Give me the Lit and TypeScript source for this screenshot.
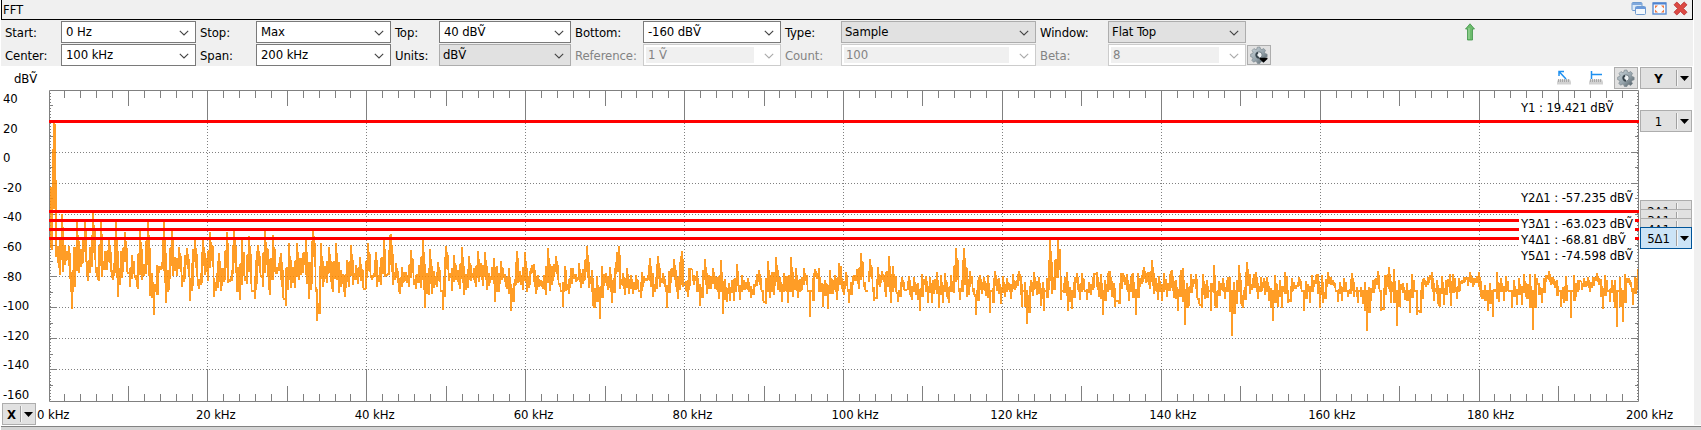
import { LitElement, html, css, svg, nothing } from "lit";
import { customElement, property } from "lit/decorators.js";

const FONT = css`13px "DejaVu Sans Condensed", "DejaVu Sans", sans-serif`;

/* Spectrum extremes: alternating x,y pairs in thirds of a pixel, per block origin. */
const BLOCKS = [
  { x: 0, y: 80, d: "150,320 152,505 157,505 158,208 161,125 166,145 167,530 173,498 179,585 185,403 190,575 195,495 200,540 206,498 211,598 216,688 221,500 226,622 232,425 237,580 243,508 248,548 254,425 258,545 263,604 270,500 275,560 280,400 285,540 291,592 297,604 302,425 307,590 315,512 320,570 327,475 332,575 338,600 343,550 349,427 355,650 362,512 368,575 374,457 380,575 386,578 391,620 396,525 402,575 409,600 414,628 420,450 426,600 432,553 438,583 443,416 450,647 456,578 462,706 470,555 478,580 485,545 491,427 498,670 504,570 510,598 515,443 520,588 526,530 532,588 537,500 543,575 547,622 553,560 561,503 566,588 570,662 576,550 585,480 591,590 597,626 603,580 609,477 615,585 620,535 623,602 631,455 638,560 643,652 650,580 656,518 662,634 668,565 674,600 680,457 685,610 692,590 697,570 703,450 709,580 711,635 715,560 720,661 726,478 733,580 740,611 748,467 754,613 764,658 768,540 773,495 779,580 785,595 789,620 796,452 803,590 810,645 820,464 826,575 831,580 837,550 844,518 850,655 858,677 866,488 873,625 879,560 885,625 891,488 896,600 903,535 910,580 918,478 927,658 933,545 938,443 944,560 950,724 956,668 962,490 968,620 974,558 980,610 986,500 992,605 1000,635 1009,488 1017,638 1023,570 1029,600 1035,652 1040,540 1047,620 1054,495 1060,615 1068,555 1073,612 1079,532 1088,625 1097,628 1103,488 1109,575 1115,600 1121,580 1127,517 1132,622 1139,560 1144,615 1151,480 1156,590 1163,580 1169,465 1173,463 1180,615 1187,550 1193,610 1199,643 1207,560 1213,605 1219,575 1228,620 1234,511 1240,580 1249,628 1256,555" },
  { x: 420, y: 200, d: "3,265 8,110 15,325 22,218 27,285 31,148 37,283 43,212 50,260 55,187 60,245 68,330 73,230 78,137 84,210 88,243 95,203 97,273 103,166 108,240 115,210 120,268 125,142 131,284 138,222 144,265 148,167 154,243 162,205 167,262 173,154 178,245 184,190 190,257 196,155 201,270 208,220 215,240 221,175 224,305 231,197 238,277 242,182 248,235 254,222 258,262 263,268 268,203 273,334 279,265 285,238 290,154 294,250 301,212 308,270 314,157 320,275 327,228 333,203 342,192 347,283 353,225 357,255 362,240 368,268 373,225 379,284 385,143 391,274 397,197 403,232 408,167 413,240 421,260 429,322 434,197 439,235 446,283 452,205 460,207 468,246 473,230 478,190 483,265 490,207 496,240 502,138 508,265 515,210 520,318 525,320 530,228 540,356 546,198 552,258 559,220 564,270 570,200 576,308 582,235 588,187 596,138 600,268 608,218 614,285 620,205 626,282 632,224 640,283 648,225 655,268 662,293 667,215 673,248 683,225 691,175 700,290 707,230 714,169 720,260 728,220 734,262 740,323 748,212 754,250 761,178 768,260 774,298 780,187 785,154 790,260 797,243 803,292 808,205 815,208 822,255 830,212 840,317 846,260 855,178 862,282 868,225 873,268 880,203 886,266 892,230 896,296 903,181 909,341 915,238 920,305 926,250 930,303 935,240 942,303 950,193 955,245 960,300 966,225 971,263 977,267 983,233 993,295 1000,268 1007,240 1018,211 1023,270 1030,302 1038,312 1044,184 1050,295 1056,215 1062,285 1067,172 1073,270 1079,230 1086,307 1092,220 1098,240 1105,310 1114,172 1120,290 1128,205 1134,295 1140,238 1145,270 1153,205 1160,255 1171,350 1178,235 1185,208 1192,238 1198,205 1208,322 1215,240 1220,267 1225,328 1230,210 1238,282 1245,225 1250,300 1256,190" },
  { x: 840, y: 200, d: "3,213 6,268 12,285 17,217 22,240 27,310 32,245 40,255 50,208 57,268 64,160 70,230 76,270 83,270 89,176 95,238 102,302 107,292 113,202 119,260 125,213 131,245 138,290 148,168 153,310 160,197 167,275 173,307 180,270 186,232 192,270 200,268 206,228 210,285 217,300 222,232 228,285 235,248 240,334 246,223 252,256 258,227 265,308 271,232 276,310 280,240 285,270 291,217 297,325 304,225 308,310 315,220 321,292 327,310 333,226 341,280 348,144 355,240 361,300 367,240 372,145 380,290 385,275 391,214 397,250 403,285 409,345 415,240 421,225 426,283 432,232 438,288 444,226 451,338 458,265 466,214 472,272 478,235 484,313 489,228 495,292 501,235 506,270 513,298 518,223 524,270 530,240 538,212 542,255 544,235 547,320 556,245 561,373 567,285 573,240 580,288 583,217 590,285 596,232 603,317 608,246 613,332 620,235 626,270 631,120 635,283 641,230 645,270 654,120 660,190 664,300 673,250 680,217 684,334 691,262 697,328 703,245 710,220 715,270 720,300 727,218 733,270 741,300 747,245 753,285 760,230 770,215 776,290 782,222 788,345 794,240 798,303 804,220 811,214 816,290 822,250 826,322 836,300 842,220 850,218 855,255 862,222 868,302 874,230 880,220 888,345 894,220 900,260 906,225 912,202 918,250 925,215 931,268 937,181 942,283 948,235 953,300 958,228 966,304 972,218 978,270 982,290 990,222 997,211 1003,293 1008,240 1014,334 1020,225 1030,203 1035,374 1042,250 1048,318 1054,222 1060,262 1067,222 1072,295 1078,312 1086,325 1090,222 1096,298 1102,240 1112,332 1121,196 1126,317 1132,320 1138,243 1143,270 1148,235 1154,298 1160,240 1170,232 1176,407 1182,245 1190,312 1197,194 1202,312 1208,325 1214,260 1220,187 1230,282 1238,235 1247,215 1253,298" },
  { x: 1260, y: 200, d: "3,232 8,265 13,233 16,285 22,232 28,303 33,265 39,364 45,226 50,290 54,322 60,240 67,325 74,215 80,250 85,310 91,298 97,235 102,262 108,268 114,245 118,230 124,268 132,334 138,242 144,268 150,308 156,225 162,262 168,225 173,223 179,323 185,225 190,310 196,275 203,215 212,255 220,240 225,265 235,305 240,245 245,303 251,235 257,262 264,292 270,268 276,220 282,290 290,262 295,310 302,260 308,312 314,245 320,392 326,260 332,303 340,240 346,268 354,214 358,268 363,332 370,325 376,225 382,260 387,200 394,310 402,208 410,377 416,240 423,270 430,250 435,300 442,250 450,340 456,223 462,265 472,344 480,330 486,245 493,235 498,262 505,230 511,240 517,217 522,302 530,240 535,312 540,320 546,228 551,316 558,240 563,262 569,222 573,317 580,222 586,255 592,298 598,235 606,253 613,232 620,240 625,258 631,215 638,260 644,235 652,250 657,215 663,290 670,292 676,255 685,334 691,250 700,352 710,217 717,305 724,235 731,303 738,228 745,265 756,325 762,240 772,316 777,235 786,315 792,222 798,290 805,298 810,222 819,391 826,223 832,255 838,248 845,310 851,235 857,245 866,214 872,255 878,230 884,265 892,240 902,320 908,262 912,310 919,228 932,355 942,226 948,290 955,240 962,245 967,270 973,235 979,262 985,230 991,275 998,230 1003,250 1010,220 1016,255 1022,238 1028,328 1036,225 1042,265 1050,305 1056,240 1062,305 1066,240 1071,380 1079,232 1088,367 1094,222 1100,250 1106,235 1112,260 1118,315 1124,232 1130,270 1134,208" },
];

/* One pixel column per step: every column spans the samples that fall near it. */
function tracePath(): string {
  const p: [number, number][] = [];
  for (const b of BLOCKS)
    for (const s of b.d.split(" ")) {
      const [x, y] = s.split(",").map(Number);
      p.push([b.x + x / 3, b.y + y / 3]);
    }
  const top = new Map<number, number>();
  const bottom = new Map<number, number>();
  const mark = (c: number, y0: number, y1: number) => {
    top.set(c, Math.min(top.get(c) ?? 999, y0));
    bottom.set(c, Math.max(bottom.get(c) ?? 0, y1));
  };
  for (let i = 0; i < p.length; i++) {
    const [x, y] = p[i];
    const c = Math.round(x - 1);
    const prev = p[i - 1] ?? p[i];
    const next = p[i + 1] ?? p[i];
    const near = y < prev[1] ? Math.max(prev[1], next[1]) : Math.min(prev[1], next[1]);
    const a = Math.min(y, near);
    const b = Math.max(y, near);
    const body = a + (b - a) * 0.6;
    if (y <= prev[1]) {
      mark(c, y, body);
      mark(c + 1, y, body);
      mark(c + 2, y + (body - y) * 0.35, body);
    } else {
      mark(c, a + (b - a) * 0.4, y);
      mark(c + 1, a + (b - a) * 0.4, y);
    }
    if (i > 0) {
      const u = Math.min(prev[1], y);
      const l = Math.max(prev[1], y);
      const from = Math.round(prev[0]);
      for (let k = from; k <= x; k++) {
        const cap = Math.max(u + 2, Math.min(l - (l - u) * 0.25, 292));
        mark(k, Math.min(u + (l - u) * 0.38, cap - 2), cap);
      }
    }
  }
  let out = "";
  for (const [c, t] of top) {
    if (c < 50 || c > 1637) continue;
    const t0 = Math.round(t);
    out += `M${c} ${t0}h1V${Math.max(t0 + 2, Math.round(bottom.get(c)!))}h-1z`;
  }
  return out;
}

const chevron = svg`<svg class="chev" width="10" height="6" viewBox="0 0 10 6"><path d="M.8 .8L5 5L9.2 .8" fill="none" stroke="currentColor" stroke-width="1.1"/></svg>`;

const gear = (menu: boolean) => html`<svg width="18" height="18" viewBox="0 0 18 18">
  <defs><linearGradient id="g" x1="0" y1="0" x2="1" y2="1"><stop offset="0" stop-color="#cfd9de"/><stop offset=".55" stop-color="#94a2aa"/><stop offset="1" stop-color="#47535a"/></linearGradient></defs>
  <path d="M7.3 1.2l2.6-.2.6 2 1.4.6 1.8-1.1 1.8 1.9-1 1.8.6 1.4 2 .6v2.6l-2 .6-.6 1.4 1 1.8-1.8 1.8-1.8-1-1.4.6-.6 1.5H7.4l-.6-1.7-1.4-.6-1.8 1-1.8-1.9 1-1.7-.6-1.4-1.6-.6.1-2.5 1.8-.5.6-1.4-1-1.8 1.8-1.8 1.8 1 1.2-.5z" fill="url(#g)" stroke="#7b878e" stroke-width=".7"/>
  <circle cx="9" cy="9" r="3.2" fill="#eef2f4" stroke="#6f7c84" stroke-width="1"/>
  <path d="M8 6.600a2.600 2.600 0 0 0 1 5" fill="none" stroke="#36434b" stroke-width="1.800"/>
  ${menu ? svg`<path d="M9.500 11.800h8v1.200L13.500 16.500L9.500 13z" fill="#000"/>` : nothing}
</svg>`;

@customElement("fft-select")
class FftSelect extends LitElement {
  @property() value = "";
  @property() kind = "edit";
  static styles = css`
    :host { display: block; height: 22px; padding-bottom: 1px; }
    .box { box-sizing: border-box; height: 22px; border: 1px solid #7a7a7a; background: #fff; display: flex; align-items: center; padding: 2px 6px 2px 2px; font: ${FONT}; color: #000; }
    .text { flex: 1; line-height: 16px; height: 16px; padding-left: 2px; margin-right: 10px; white-space: pre; letter-spacing: -0.1px; }
    .chev { color: #444; margin-top: 1px; display: block; }
    .list { background: #e1e1e1; border-color: #adadad; }
    .list .text { padding-left: 1px; }
    .off { border-color: #ccc; color: #838383; }
    .off .text { background: #f0f0f0; }
    .off .chev { color: #aaa; }
  `;
  render() {
    return html`<div class="box ${this.kind}"><span class="text">${this.value}</span>${chevron}</div>`;
  }
}

@customElement("split-button")
class SplitButton extends LitElement {
  @property() label = "";
  @property() tone = "";
  static styles = css`
    :host { display: block; }
    .btn { box-sizing: border-box; height: 22px; width: 100%; border: 1px solid #adadad; background: #e1e1e1; display: flex; align-items: center; font: ${FONT}; }
    .name { flex: 1; text-align: center; white-space: nowrap; }
    .drop { width: 15px; height: 16px; border-left: 1px solid #a0a0a0; box-shadow: inset 1px 0 #f6f6f6; display: flex; align-items: center; justify-content: center; box-sizing: border-box; }
    .bold .name { font-weight: bold; }
    .sel { background: #cce4f7; border-color: #005499; }
  `;
  render() {
    return html`<div class="btn ${this.tone}">
      <span class="name">${this.label}</span>
      <span class="drop"><svg width="9" height="5"><path d="M0 0h9L4.5 5z"/></svg></span>
    </div>`;
  }
}

@customElement("app-root")
class AppRoot extends LitElement {
  static styles = css`
    :host { display: block; width: 1701px; height: 430px; background: #fff; overflow: hidden; position: relative; font: ${FONT}; color: #000; letter-spacing: -0.1px; }
    .frame { display: grid; grid-template-columns: 1693px 8px; height: 425px; }
    .side { background: #f0f0f0; margin-left: 1px; }
    .foot { height: 5px; box-sizing: border-box; border-top: 1px solid #828282; background: #d4d4d4; margin: 1px 0 0 1px; }
    .title { box-sizing: border-box; height: 20px; margin-left: 1px; border: solid #000; border-width: 0 1px 1px 1px; background: #f0f0f0; display: flex; align-items: flex-start; justify-content: space-between; padding: 1px 4px 0 1px; line-height: 17px; }
    .wins { display: flex; gap: 6px; }
    .tools { margin-left: 1px; height: 46px; box-sizing: border-box; padding-top: 1px; background: #f0f0f0; display: grid; grid-template-columns: 60px 135px 60px 135px 48px 132px 72px 138px 60px 195px 72px 138px 1fr; grid-auto-rows: 23px; }
    .lab { padding-left: 4px; line-height: 23px; }
    .dim { color: #838383; }
    .up { display: flex; justify-content: center; padding-top: 2px; }
    .gear { box-sizing: border-box; width: 24px; height: 20px; border: 1px solid #adadad; background: #e1e1e1; display: flex; align-items: center; justify-content: center; margin: 1px 0 0 1px; }
    .head { height: 24px; display: flex; align-items: center; padding: 0 1px 0 14px; box-sizing: border-box; }
    .unit { flex: 1; }
    .rulers { display: flex; gap: 15px; margin-right: 9px; }
    .tall { height: 22px; margin: 0 2px 0 0; }
    .ybtn { width: 52px; }
    .body { display: grid; grid-template-columns: 49px 1590px 54px; grid-template-rows: 312px; }
    .ylab { display: flex; flex-direction: column; justify-content: space-between; padding: 1px 0 0 3px; height: 313px; box-sizing: border-box; }
    .ylab span { line-height: 16px; height: 16px; }
    .plot { display: block; }
    .reads { font: ${FONT}; letter-spacing: -0.1px; }
    .curs { position: relative; }
    .cur { position: absolute; left: 1px; width: 52px; }
    .under { height: 9px; overflow: hidden; }
    .xrow { display: flex; align-items: center; height: 22px; padding: 1px 0 0 2px; }
    .xbtn { width: 34px; flex: none; }
    .xlab { display: flex; padding-left: 1px; width: 1656px; flex: none; }
    .xlab span { width: 158.9px; flex: none; white-space: nowrap; }
  `;

  renderPlot() {
    const grid = [];
    for (let i = 1; i < 100; i++) {
      const x = Math.floor(49 + 15.89 * i) + 0.5;
      if (x > 1637) break;
      if (i % 10 === 0) {
        grid.push(svg`<path d="M${x} 90V121M${x} 370V401"/><path d="M${x} 123V370" stroke-dasharray="1 2"/>`);
      } else {
        const l = i % 5 === 0 ? 15 : 7;
        grid.push(svg`<path d="M${x} 91v${l}M${x} 401v${-l}"/>`);
      }
    }
    for (let i = 1; i < 20; i++) {
      const y = Math.floor(90 + 15.55 * i) + 0.5;
      if (i % 2) grid.push(svg`<path d="M50 ${y}h3M1638 ${y}h-3"/>`);
      else grid.push(svg`<path d="M50 ${y}h6M1638 ${y}h-6"/><path d="M56 ${y}H1632" stroke-dasharray="1 2"/>`);
    }
    const reads: [number, string][] = [
      [112, "Y1 : 19.421 dBṼ"], [202, "Y2Δ1 : -57.235 dBṼ"], [228, "Y3Δ1 : -63.023 dBṼ"],
      [244, "Y4Δ1 : -68.81 dBṼ"], [260, "Y5Δ1 : -74.598 dBṼ"],
    ];
    return html`<svg class="plot" width="1590" height="312" viewBox="49 90 1590 312">
      <g fill="none" stroke="#808080">
        <path d="M49.5 90.5H1638.5V401.5H49.5Z"/>
        <path d="M50.5 93V401M1637.5 93V401" stroke-dasharray="1 2"/>
        ${grid}
      </g>
      <path d=${tracePath()} fill="#ff8c00" fill-opacity=".85" shape-rendering="crispEdges"/>
      <path d="M49 121.5H1639M49 211.5H1639M49 220.5H1639M49 229.5H1639M49 238.5H1639" stroke="#f00" stroke-width="3"/>
      <rect x="1519" y="214" width="116" height="50" fill="#fff"/>
      <g class="reads">${reads.map(([y, t]) => svg`<text x="1521" y=${y}>${t}</text>`)}</g>
    </svg>`;
  }

  render() {
    const sel = (v: string, k = "edit") => html`<fft-select value=${v} kind=${k}></fft-select>`;
    const lab = (t: string, off = false) => html`<span class="lab ${off ? "dim" : ""}">${t}</span>`;
    const cursors: [number, string, string][] = [[20, "1", ""], [110, "2Δ1", "under"], [119, "3Δ1", "under"], [128, "4Δ1", "under"], [137, "5Δ1", "sel"]];
    const ruler = svg`<path d="M1 14.5V12l1-2.5h12l1 2.500V14.500z" fill="#d2d2d2"/><path d="M2.500 9v3M4.500 9v3M6.500 9v3M8.500 9v3M10.500 9v3M12.500 9v3" stroke="#9c9c9c" stroke-width=".8"/>`;
    return html`
      <div class="frame">
        <div>
          <div class="title">
            <span>FFT</span>
            <span class="wins">
              <svg width="15" height="15" viewBox="0 0 15 15"><rect x="1" y="1.500" width="10" height="8" rx="1" fill="#dceaf8" stroke="#6f9bd0"/><path d="M1 3h10" stroke="#7fa8dc" stroke-width="2"/><rect x="4.500" y="5.500" width="10" height="8" rx="1" fill="#f4f8fc" stroke="#6f9bd0"/><path d="M4.500 7h10" stroke="#6c9adb" stroke-width="2"/></svg>
              <svg width="15" height="15" viewBox="0 0 15 15"><rect x="1" y="2" width="13" height="11" fill="#f8fbff" stroke="#5b8bd0" stroke-width="1.400"/><path d="M1 2.500h13" stroke="#4f83cf" stroke-width="2"/><path d="M3 4.500h3L3 7.500zM12 4.500v3L9 4.500zM3 11.500v-3l3 3zM12 11.500H9l3-3z" fill="#f07840"/></svg>
              <svg width="15" height="15" viewBox="0 0 15 15"><path d="M3.800 1L7.500 4.600L11.200 1L14 3.800L10.400 7.500L14 11.200L11.200 14L7.500 10.400L3.800 14L1 11.200L4.600 7.500L1 3.800z" fill="#dc4a44" stroke="#b83030" stroke-width=".8"/></svg>
            </span>
          </div>
          <div class="tools">
            ${lab("Start:")}${sel("0 Hz")}${lab("Stop:")}${sel("Max")}${lab("Top:")}${sel("40 dBṼ")}${lab("Bottom:")}${sel("-160 dBṼ")}${lab("Type:")}${sel("Sample", "list")}${lab("Window:")}${sel("Flat Top", "list")}
            <span class="up"><svg width="10" height="18" viewBox="0 0 10 18"><path d="M5 .8L9.500 6H7.500V17H2.500V6H.5z" fill="#6dbb6d" stroke="#3f9447" stroke-width=".8"/><path d="M4 5V16" stroke="#a4dba2"/></svg></span>
            ${lab("Center:")}${sel("100 kHz")}${lab("Span:")}${sel("200 kHz")}${lab("Units:")}${sel("dBṼ", "list")}${lab("Reference:", true)}${sel("1 Ṽ", "off")}${lab("Count:", true)}${sel("100", "off")}${lab("Beta:", true)}${sel("8", "off")}
            <span class="gear">${gear(true)}</span>
          </div>
          <div class="head">
            <span class="unit">dBṼ</span>
            <span class="rulers">
              <svg width="17" height="16" viewBox="0 0 17 16">${ruler}<path d="M3 1.500L10 9M3 6V1.500H8" fill="none" stroke="#1e90f0" stroke-width="1.500"/></svg>
              <svg width="17" height="16" viewBox="0 0 17 16">${ruler}<path d="M3.500 1V9M3.500 4.500H14" fill="none" stroke="#1e90f0" stroke-width="1.500"/></svg>
            </span>
            <span class="gear tall">${gear(false)}</span>
            <split-button class="ybtn" label="Y" tone="bold"></split-button>
          </div>
          <div class="body">
            <div class="ylab">${[40, 20, 0, -20, -40, -60, -80, -100, -120, -140, -160].map((v) => html`<span>${v}</span>`)}</div>
            ${this.renderPlot()}
            <div class="curs">${cursors.map(([y, t, k]) => html`<split-button class="cur ${k}" style="top:${y}px" label=${t} tone=${k}></split-button>`)}</div>
          </div>
          <div class="xrow">
            <split-button class="xbtn" label="X" tone="bold"></split-button>
            <div class="xlab">${Array.from({ length: 11 }, (_, i) => html`<span>${i * 20} kHz</span>`)}</div>
          </div>
        </div>
        <div class="side"></div>
      </div>
      <div class="foot"></div>
    `;
  }
}
